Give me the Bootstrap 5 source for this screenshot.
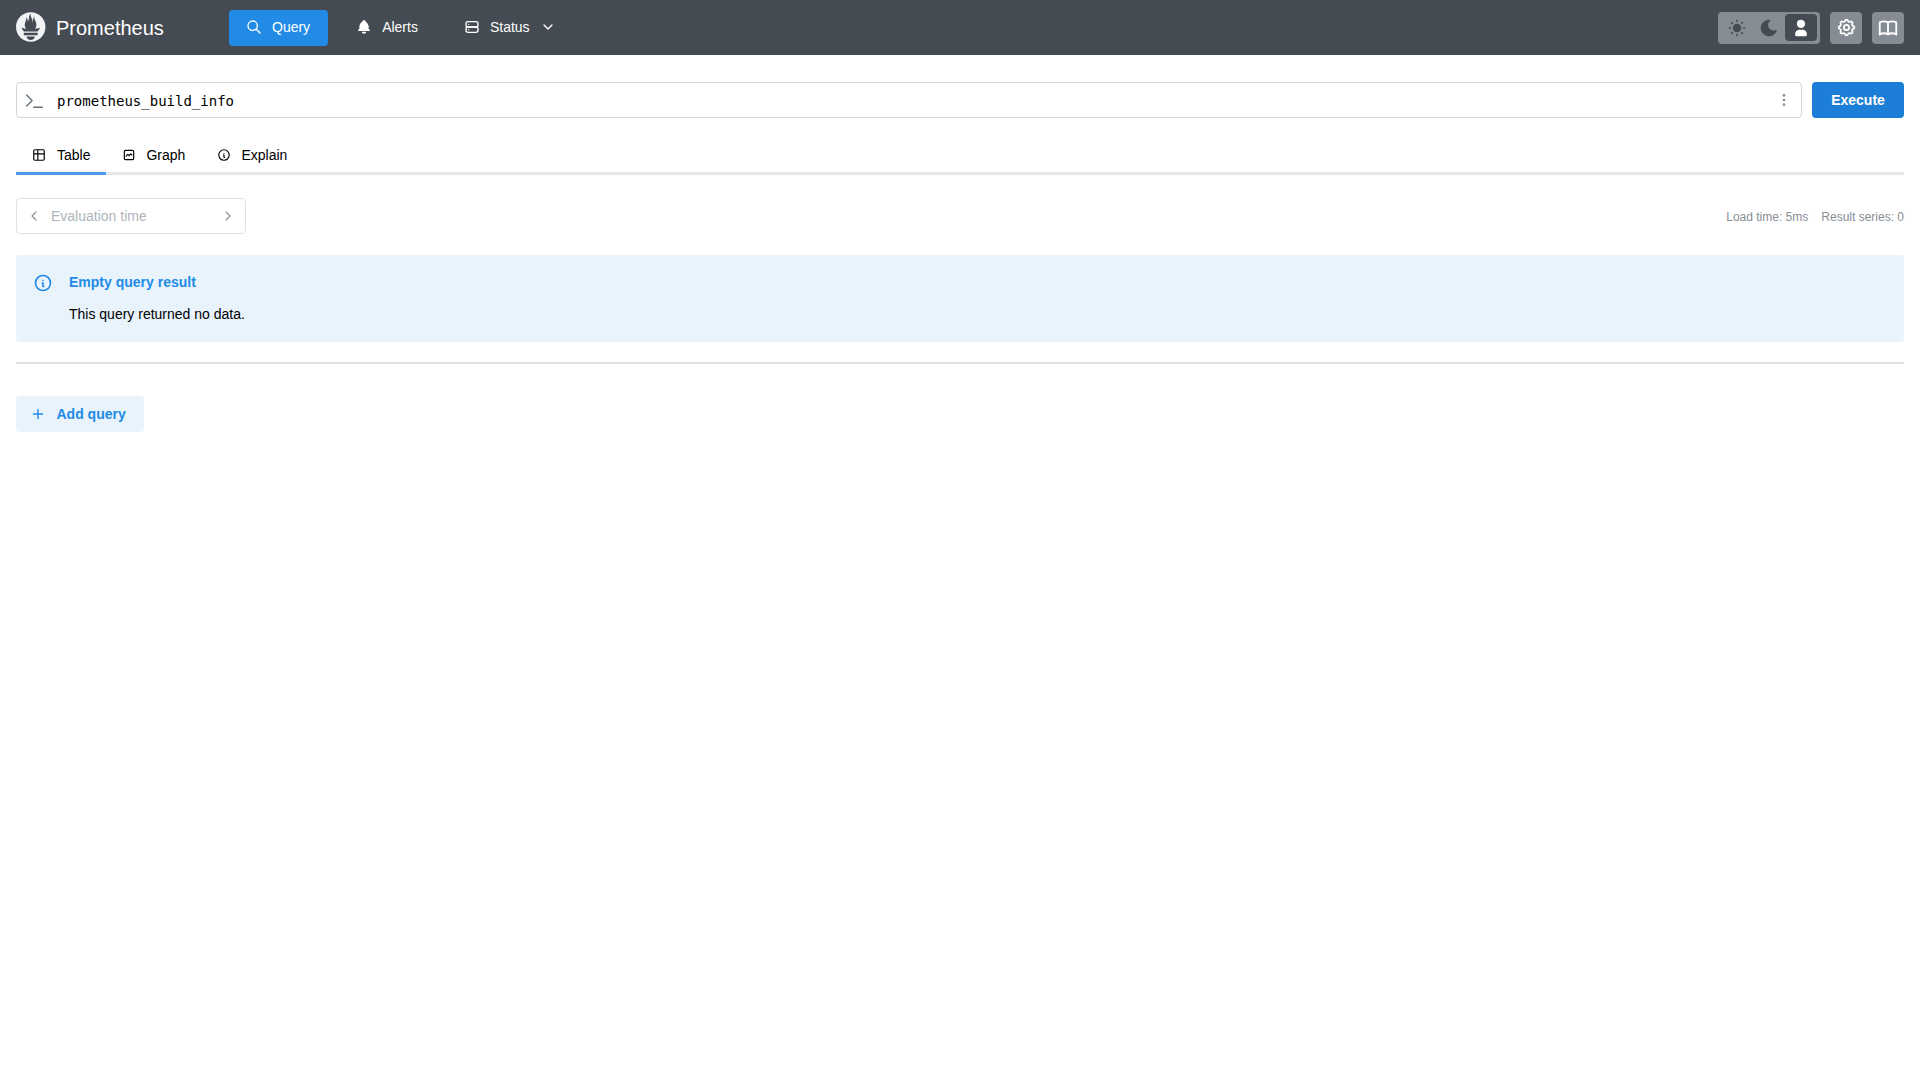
<!DOCTYPE html>
<html lang="en">
<head>
<meta charset="utf-8">
<title>Prometheus</title>
<link href="https://cdn.jsdelivr.net/npm/bootstrap@5.3.0/dist/css/bootstrap.min.css" rel="stylesheet">
<style>
body{font-family:"Liberation Sans",Arial,sans-serif;font-size:14px;color:#000;background:#fff;line-height:1.55}
svg{display:block;flex:none}
.ic{fill:none;stroke:currentColor;stroke-width:2;stroke-linecap:round;stroke-linejoin:round}
.ic-fill{fill:currentColor;stroke:none}
.top-bar{height:55px;background:#444b53;padding:0 16px;color:#fff}
.brand-box{width:213px;gap:10px;font-size:20px;line-height:1}
.brand-box svg{margin-top:-1px}
.nav-btn{height:36px;padding:0 18px 2px 17px;font-size:14px;color:#fff;border:0;border-radius:4px;gap:10px;line-height:1}
.nav-btn:hover{color:#fff}
.nav-btn.is-on{background:#228be6}
.nav-stack{gap:11px}
.theme-set{background:#858c94;border-radius:4px;height:32px;width:102px;padding:0 3px;color:#444b53}
.theme-opt{width:32px;height:27px;border-radius:4px}
.theme-opt.is-on{background:#444b53;color:#fff}
.top-tools{gap:10px}
.tool-btn{width:32px;height:32px;background:#858c94;border-radius:4px;color:#fff}
.page-body{padding:27px 16px 0}
.query-row{gap:10px}
.query-box{height:36px;border:1px solid #ced4da;border-radius:4px;padding:0 9px 0 8px;color:#000}
.query-icon{color:#6c747c;margin-right:13px;margin-left:0}
.query-text{font-family:"DejaVu Sans Mono",monospace;font-size:14px;line-height:1;padding-top:2px}
.dots{color:#868e96}
.go-btn{width:92px;height:36px;background:#1c7ed6;color:#fff;font-weight:700;font-size:14px;border:0;border-radius:4px;padding:0;line-height:1}
.go-btn:hover{background:#1c7ed6;color:#fff}
.tab-line{margin-top:19px;height:38px;border-bottom:3px solid #e4e7ea}
.tab-item{height:38px;margin-bottom:-3px;padding:0 16px;gap:10px;color:#000;border-bottom:3px solid transparent;text-decoration:none;line-height:1}
.tab-item:hover{color:#000}
.tab-item.is-on{border-bottom-color:#4a9ae8;gap:11px}
.tool-line{margin-top:23px}
.eval-box{width:230px;height:36px;border:1px solid #dee2e6;border-radius:4px;padding:0 9px;color:#868e96}
.eval-box .ic{stroke-width:1.6}
.eval-text{color:#adb5bd;line-height:1;margin-left:9px}
.stat-text{font-size:12px;color:#868e96;gap:13px;line-height:1;margin-top:2px}
.note-box{margin-top:21px;height:87px;background:#e9f3fc;border-radius:4px;padding:16px 16px 16px 17px;gap:16px;border:0;margin-bottom:0;color:#000}
.note-icon{color:#228be6;margin-top:2px}
.note-title{color:#228be6;font-weight:700;line-height:20px;margin-top:1px}
.note-msg{line-height:20px;margin-top:12px}
.split-line{margin:20px 0 0;height:2px;background:#dee2e6;border:0;opacity:1}
.add-btn{margin-top:32px;width:128px;height:36px;background:#e9f3fc;color:#228be6;font-weight:700;font-size:14px;border:0;border-radius:4px;padding:0 0 0 14px;gap:10.5px;line-height:1}
.add-btn:hover{background:#e9f3fc;color:#228be6}
</style>
</head>
<body>
<header class="top-bar d-flex align-items-center">
  <div class="brand-box d-flex align-items-center">
    <svg width="30" height="30" viewBox="0 0 115.333 114"><path fill="#f1f3f5" d="M56.667.667C25.372.667 0 26.036 0 57.332c0 31.295 25.372 56.666 56.667 56.666s56.666-25.371 56.666-56.666S87.961.667 56.667.667zm0 106.055c-8.904 0-16.123-5.948-16.123-13.283H72.79c0 7.334-7.219 13.283-16.123 13.283zM83.297 89H30.034v-9.658h53.264V89zm-.191-14.629H30.186c-.176-.203-.356-.403-.526-.609-5.452-6.62-6.736-10.076-7.983-13.598-.021-.116 6.611 1.355 11.314 2.413 0 0 2.42.56 5.958 1.205-3.397-3.982-5.414-9.044-5.414-14.218 0-11.359 8.712-21.285 5.569-29.308 3.059.249 6.331 6.456 6.552 16.161 3.252-4.494 4.613-12.701 4.613-17.733 0-5.21 3.433-11.262 6.867-11.469-3.061 5.045.793 9.37 4.219 20.099 1.285 4.03 1.121 10.812 2.113 15.113.329-8.933 1.865-21.967 7.532-26.467-2.5 5.667.37 12.758 2.333 16.167 3.167 5.5 5.087 9.667 5.087 17.548 0 5.284-1.951 10.259-5.242 14.148 3.742-.702 6.326-1.335 6.326-1.335l12.152-2.371c.001-.001-1.765 7.261-8.55 14.254z"/></svg>
    <span>Prometheus</span>
  </div>
  <nav class="nav-stack d-flex align-items-center">
    <a class="nav-btn is-on btn d-flex align-items-center" href="#"><svg class="ic" width="16" height="16" viewBox="0 0 24 24"><circle cx="10" cy="10" r="7"/><path d="M21 21l-6-6"/></svg>Query</a>
    <a class="nav-btn btn d-flex align-items-center" href="#"><svg class="ic-fill" width="16" height="16" viewBox="0 0 24 24"><path d="M14.235 19c.865 0 1.322 1.024 .745 1.668a3.992 3.992 0 0 1 -2.98 1.332a3.992 3.992 0 0 1 -2.98 -1.332c-.552 -.616 -.158 -1.579 .634 -1.661l.11 -.006h4.471z"/><path d="M12 2c1.358 0 2.506 .903 2.875 2.141l.046 .171l.008 .043a8.013 8.013 0 0 1 4.024 6.069l.028 .287l.019 .289v2.931l.021 .136a3 3 0 0 0 1.143 1.847l.167 .117l.162 .099c.86 .487 .56 1.766 -.377 1.864l-.116 .006h-16c-1.028 0 -1.387 -1.364 -.493 -1.87a3 3 0 0 0 1.472 -2.063l.021 -.143l.001 -2.97a8 8 0 0 1 3.821 -6.454l.248 -.146l.01 -.043a3.003 3.003 0 0 1 2.562 -2.29l.182 -.017l.176 -.004z"/></svg>Alerts</a>
    <a class="nav-btn btn d-flex align-items-center" href="#"><svg class="ic" width="16" height="16" viewBox="0 0 24 24"><rect x="3" y="4" width="18" height="8" rx="3"/><rect x="3" y="12" width="18" height="8" rx="3"/><path d="M7 8v.01M7 16v.01"/></svg>Status<svg class="ic" width="16" height="16" viewBox="0 0 24 24"><path d="M6 9l6 6l6 -6"/></svg></a>
  </nav>
  <div class="top-tools d-flex align-items-center ms-auto">
    <div class="theme-set d-flex align-items-center">
      <div class="theme-opt d-flex align-items-center justify-content-center"><svg class="ic" width="20" height="20" viewBox="0 0 24 24"><circle class="ic-fill" cx="12" cy="12" r="5"/><path d="M3 12h1M12 3v1M20 12h1M12 20v1M5.6 5.6l.7 .7M18.4 5.6l-.7 .7M17.7 17.7l.7 .7M6.3 17.7l-.7 .7"/></svg></div>
      <div class="theme-opt d-flex align-items-center justify-content-center"><svg class="ic-fill" width="20" height="20" viewBox="0 0 24 24"><path d="M12 1.992a10 10 0 1 0 9.236 13.838c.341 -.82 -.476 -1.644 -1.298 -1.31a6.5 6.5 0 0 1 -6.864 -10.787l.077 -.08c.551 -.63 .113 -1.653 -.758 -1.653h-.266l-.068 -.006l-.06 -.002z"/></svg></div>
      <div class="theme-opt is-on d-flex align-items-center justify-content-center"><svg class="ic-fill" width="20" height="20" viewBox="0 0 24 24"><path d="M12 2a5 5 0 1 1 -5 5l.005 -.217a5 5 0 0 1 4.995 -4.783z"/><path d="M14 14a5 5 0 0 1 5 5v1a2 2 0 0 1 -2 2h-10a2 2 0 0 1 -2 -2v-1a5 5 0 0 1 5 -5h4z"/></svg></div>
    </div>
    <div class="tool-btn d-flex align-items-center justify-content-center"><svg class="ic" width="21" height="21" viewBox="0 0 24 24"><path d="M10.325 4.317c.426 -1.756 2.924 -1.756 3.35 0a1.724 1.724 0 0 0 2.573 1.066c1.543 -.94 3.31 .826 2.37 2.37a1.724 1.724 0 0 0 1.065 2.572c1.756 .426 1.756 2.924 0 3.35a1.724 1.724 0 0 0 -1.066 2.573c.94 1.543 -.826 3.31 -2.37 2.37a1.724 1.724 0 0 0 -2.572 1.065c-.426 1.756 -2.924 1.756 -3.35 0a1.724 1.724 0 0 0 -2.573 -1.066c-1.543 .94 -3.31 -.826 -2.37 -2.37a1.724 1.724 0 0 0 -1.065 -2.572c-1.756 -.426 -1.756 -2.924 0 -3.35a1.724 1.724 0 0 0 1.066 -2.573c-.94 -1.543 .826 -3.31 2.37 -2.37c1 .608 2.296 .07 2.572 -1.065z"/><circle cx="12" cy="12" r="3"/></svg></div>
    <div class="tool-btn d-flex align-items-center justify-content-center"><svg class="ic" width="22" height="22" viewBox="0 0 24 24"><path d="M3 19a9 9 0 0 1 9 0a9 9 0 0 1 9 0M3 6a9 9 0 0 1 9 0a9 9 0 0 1 9 0M3 6v13M12 6v13M21 6v13"/></svg></div>
  </div>
</header>
<main class="page-body">
  <div class="query-row d-flex">
    <div class="query-box d-flex align-items-center flex-grow-1">
      <svg class="ic query-icon" width="19" height="19" viewBox="0 0 24 24"><path d="M2 5l7 7l-7 7M11 20.5h11" stroke-width="1.8"/></svg>
      <span class="query-text">prometheus_build_info</span>
      <svg class="ic-fill dots ms-auto" width="16" height="16" viewBox="0 0 24 24"><circle cx="12" cy="5" r="2"/><circle cx="12" cy="12" r="2"/><circle cx="12" cy="19" r="2"/></svg>
    </div>
    <button class="go-btn btn" type="button">Execute</button>
  </div>
  <div class="tab-line nav">
    <a class="tab-item is-on d-flex align-items-center" href="#"><svg class="ic" width="14" height="14" viewBox="0 0 24 24"><path d="M3 5a2 2 0 0 1 2-2h14a2 2 0 0 1 2 2v14a2 2 0 0 1-2 2H5a2 2 0 0 1-2-2zM3 10h18M10 3v18"/></svg>Table</a>
    <a class="tab-item d-flex align-items-center" href="#"><svg class="ic" width="14" height="14" viewBox="0 0 24 24"><path d="M4 18v-12a2 2 0 0 1 2 -2h12a2 2 0 0 1 2 2v12a2 2 0 0 1 -2 2h-12a2 2 0 0 1 -2 -2zM7 14l3 -3l2 2l3 -3l2 2"/></svg>Graph</a>
    <a class="tab-item d-flex align-items-center" href="#"><svg class="ic" width="14" height="14" viewBox="0 0 24 24"><path d="M3 12a9 9 0 1 0 18 0a9 9 0 0 0 -18 0M12 9h.01M11 12h1v4h1"/></svg>Explain</a>
  </div>
  <div class="tool-line d-flex align-items-center justify-content-between">
    <div class="eval-box d-flex align-items-center">
      <svg class="ic" width="16" height="16" viewBox="0 0 24 24"><path d="M15 6l-6 6l6 6"/></svg>
      <span class="eval-text">Evaluation time</span>
      <svg class="ic ms-auto" width="16" height="16" viewBox="0 0 24 24"><path d="M9 6l6 6l-6 6"/></svg>
    </div>
    <div class="stat-text d-flex"><span>Load time: 5ms</span><span>Result series: 0</span></div>
  </div>
  <div class="note-box alert d-flex" role="alert">
    <svg class="ic note-icon" width="20" height="20" viewBox="0 0 24 24"><path d="M3 12a9 9 0 1 0 18 0a9 9 0 0 0 -18 0M12 9h.01M11 12h1v4h1"/></svg>
    <div>
      <div class="note-title">Empty query result</div>
      <div class="note-msg">This query returned no data.</div>
    </div>
  </div>
  <hr class="split-line">
  <button class="add-btn btn d-flex align-items-center" type="button"><svg class="ic" width="16" height="16" viewBox="0 0 24 24"><path d="M12 5v14M5 12h14"/></svg>Add query</button>
</main>
<script src="https://cdn.jsdelivr.net/npm/bootstrap@5.3.0/dist/js/bootstrap.bundle.min.js"></script>
</body>
</html>
